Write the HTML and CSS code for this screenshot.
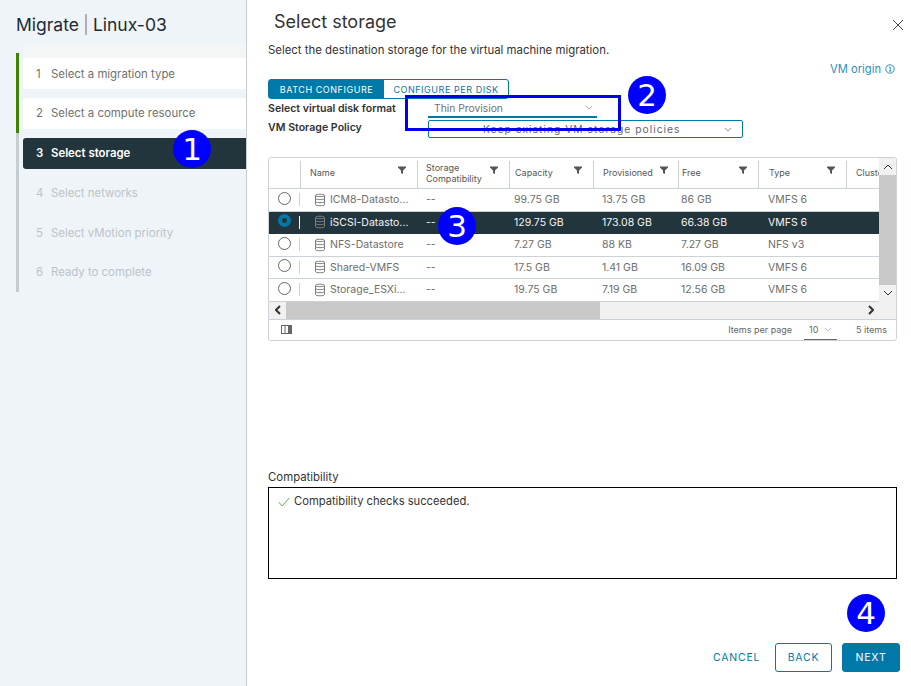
FILE: index.html
```html
<!DOCTYPE html>
<html lang="en">
<head>
    <meta charset="UTF-8">
    <meta name="viewport" content="width=device-width, initial-scale=1.0">
    <title>Migrate | Linux-03</title>
    <link rel="stylesheet" href="styles.css">
</head>
<body>
    <svg class="defs" width="0" height="0">
        <symbol id="filter" viewBox="0 0 10 10"><path d="M1 1.5h8v1L6 5.5V9L4 8V5.5L1 2.5z" fill="#555"/></symbol>
        <symbol id="db" viewBox="0 0 12 14" fill="none" stroke="#7d7d7d" stroke-width="1"><path d="M1.5 2.5C1.5 .8 10.5 .8 10.5 2.5V11.5C10.5 13.2 1.5 13.2 1.5 11.5Z"/><path d="M1.5 2.8C3 4 9 4 10.5 2.8M1.5 5.8C3 7 9 7 10.5 5.8M1.5 8.8C3 10 9 10 10.5 8.8"/></symbol>
        <symbol id="chev" viewBox="0 0 10 6" fill="none" stroke-width="1"><path d="M1 1l4 4 4-4"/></symbol>
    </svg>

    <div class="wizard">
        <aside class="sidebar">
            <h1 class="wizard-title">Migrate <span class="pipe">|</span> Linux-03</h1>
            <ol class="steps">
                <li class="step done first"><span class="step-box"><span class="num">1</span>Select a migration type</span></li>
                <li class="step done"><span class="step-box"><span class="num">2</span>Select a compute resource</span></li>
                <li class="step current"><span class="step-box"><span class="num">3</span>Select storage</span></li>
                <li class="step"><span class="step-box"><span class="num">4</span>Select networks</span></li>
                <li class="step"><span class="step-box"><span class="num">5</span>Select vMotion priority</span></li>
                <li class="step"><span class="step-box"><span class="num">6</span>Ready to complete</span></li>
            </ol>
        </aside>

        <main class="content">
            <div class="head-row">
                <h2 class="page-title">Select storage</h2>
                <svg class="close" width="12" height="12" viewBox="0 0 12 12"><path d="M1 1l10 10M11 1L1 11" stroke="#444" stroke-width="1" fill="none"/></svg>
            </div>
            <p class="desc">Select the destination storage for the virtual machine migration.</p>
            <div class="origin-row">
                <span class="origin">VM origin</span>
                <svg width="10" height="10" viewBox="0 0 10 10" fill="none" stroke="#2e8fc0"><circle cx="5" cy="5" r="4.2"/><path d="M4 3h1.2v4M4 7h2.4"/></svg>
            </div>

            <div class="tabs">
                <span class="tab active">BATCH CONFIGURE</span>
                <span class="tab">CONFIGURE PER DISK</span>
            </div>

            <div class="form-row row-format">
                <label>Select virtual disk format</label>
                <div class="select underline">
                    <span>Thin Provision</span>
                    <svg class="sel-chev" width="8" height="5"><use href="#chev" stroke="#999"/></svg>
                </div>
            </div>
            <div class="form-row row-policy">
                <label>VM Storage Policy</label>
                <div class="select boxed">
                    <span class="policy-text">Keep existing VM storage policies</span>
                    <svg class="sel-chev" width="8" height="5"><use href="#chev" stroke="#777"/></svg>
                </div>
            </div>

            <section class="grid">
                <div class="grid-top">
                    <div class="grid-body">
                        <div class="grid-row grid-head">
                            <div class="th first"></div>
                            <div class="th"><span>Name</span><svg width="10" height="10"><use href="#filter"/></svg></div>
                            <div class="th"><span>Storage<br>Compatibility</span><svg width="10" height="10"><use href="#filter"/></svg></div>
                            <div class="th"><span>Capacity</span><svg width="10" height="10"><use href="#filter"/></svg></div>
                            <div class="th"><span>Provisioned</span><svg width="10" height="10"><use href="#filter"/></svg></div>
                            <div class="th"><span>Free</span><svg width="10" height="10"><use href="#filter"/></svg></div>
                            <div class="th"><span>Type</span><svg width="10" height="10"><use href="#filter"/></svg></div>
                            <div class="th last"><span>Cluster</span></div>
                        </div>
                        <div class="grid-row item">
                            <div class="td pick"><i class="radio"></i></div>
                            <div class="td name"><svg width="12" height="14"><use href="#db"/></svg>ICM8-Datasto...</div>
                            <div class="td">--</div><div class="td">99.75 GB</div><div class="td">13.75 GB</div><div class="td">86 GB</div><div class="td">VMFS 6</div><div class="td"></div>
                        </div>
                        <div class="grid-row item selected">
                            <div class="td pick"><i class="radio on"></i></div>
                            <div class="td name"><svg width="12" height="14"><use href="#db"/></svg>iSCSI-Datasto...</div>
                            <div class="td">--</div><div class="td">129.75 GB</div><div class="td">173.08 GB</div><div class="td">66.38 GB</div><div class="td">VMFS 6</div><div class="td"></div>
                        </div>
                        <div class="grid-row item">
                            <div class="td pick"><i class="radio"></i></div>
                            <div class="td name"><svg width="12" height="14"><use href="#db"/></svg>NFS-Datastore</div>
                            <div class="td">--</div><div class="td">7.27 GB</div><div class="td">88 KB</div><div class="td">7.27 GB</div><div class="td">NFS v3</div><div class="td"></div>
                        </div>
                        <div class="grid-row item">
                            <div class="td pick"><i class="radio"></i></div>
                            <div class="td name"><svg width="12" height="14"><use href="#db"/></svg>Shared-VMFS</div>
                            <div class="td">--</div><div class="td">17.5 GB</div><div class="td">1.41 GB</div><div class="td">16.09 GB</div><div class="td">VMFS 6</div><div class="td"></div>
                        </div>
                        <div class="grid-row item">
                            <div class="td pick"><i class="radio"></i></div>
                            <div class="td name"><svg width="12" height="14"><use href="#db"/></svg>Storage_ESXi...</div>
                            <div class="td">--</div><div class="td">19.75 GB</div><div class="td">7.19 GB</div><div class="td">12.56 GB</div><div class="td">VMFS 6</div><div class="td"></div>
                        </div>
                    </div>
                    <div class="vscroll">
                        <span class="arrow"><svg width="10" height="6"><use href="#chev" class="up" stroke="#333" stroke-width="2"/></svg></span>
                        <span class="v-thumb"></span>
                        <span class="arrow"><svg width="10" height="6"><use href="#chev" stroke="#333" stroke-width="2"/></svg></span>
                    </div>
                </div>
                <div class="hscroll">
                    <span class="arrow"><svg width="6" height="10" viewBox="0 0 6 10" fill="none" stroke="#333" stroke-width="2"><path d="M5 1L1 5l4 4"/></svg></span>
                    <span class="h-thumb"></span>
                    <span class="arrow right"><svg width="6" height="10" viewBox="0 0 6 10" fill="none" stroke="#333" stroke-width="2"><path d="M1 1l4 4-4 4"/></svg></span>
                </div>
                <div class="grid-foot">
                    <svg class="cols" width="11" height="9" viewBox="0 0 11 9"><rect x=".5" y=".5" width="10" height="8" fill="none" stroke="#666"/><path d="M4 .5v8" stroke="#666"/><rect x="7" y="0" width="4" height="9" fill="#666"/></svg>
                    <span class="per-page">Items per page</span>
                    <span class="page-size">10<svg width="8" height="5"><use href="#chev" stroke="#aaa"/></svg></span>
                    <span class="count">5 items</span>
                </div>
            </section>

            <div class="compat-label">Compatibility</div>
            <div class="compat-box">
                <svg width="12" height="10" viewBox="0 0 12 10" fill="none" stroke="#6aa84f"><path d="M.8 5.2L4.2 9 11.2 1"/></svg>
                <span>Compatibility checks succeeded.</span>
            </div>

            <div class="actions">
                <button class="btn link">CANCEL</button>
                <button class="btn outline">BACK</button>
                <button class="btn primary">NEXT</button>
            </div>
        </main>
    </div>

    <!-- markup added on top of the screenshot -->
    <div class="callout c1">1</div>
    <div class="callout c2">2</div>
    <div class="callout c3">3</div>
    <div class="callout c4">4</div>
    <div class="callout-box"></div>
</body>
</html>
```

FILE: styles.css
```css
* {
    box-sizing: border-box;
}

html, body {
    margin: 0;
    height: 100%;
    overflow: hidden;
}

body {
    font-family: Inter, "Open Sans", sans-serif;
    background: #fff;
    color: #565656;
}

.defs {
    position: absolute;
}

.wizard {
    display: flex;
    height: 686px;
}

/* left column */
.sidebar {
    width: 247px;
    flex: none;
    background: #eff4f8;
    border-right: 1px solid #c5cdd3;
    padding: 15px 0 0 16px;
}

.wizard-title {
    margin: 0 0 18px;
    font-size: 17.5px;
    line-height: 20px;
    font-weight: 400;
    word-spacing: -.7px;
    color: #1c2b33;
}

.pipe {
    color: #a8703a;
    font-weight: 300;
}

.steps {
    list-style: none;
    margin: 0;
    padding: 0;
}

.step {
    height: 39.8px;
    padding: 5px 0 4px 4px;
    border-left: 3px solid #c5cdd3;
    font-size: 11.4px;
    color: #bcc3c8;
}

.step.done {
    border-left-color: #3f8400;
    color: #707070;
}

.step-box {
    display: flex;
    align-items: center;
    height: 31px;
    padding-left: 13px;
    border-radius: 3px 0 0 3px;
}

.num {
    width: 15px;
}

.step.done .step-box {
    background: #fff;
}

.step.first .step-box {
    box-shadow: 0 -13px 0 #f4f5f5;
}

.step.current {
    color: #fff;
    font-weight: 600;
}

.step.current .step-box {
    background: #22343c;
}

/* right column */
.content {
    flex: 1;
    min-width: 0;
    padding: 10px 11px 0 21px;
    display: flex;
    flex-direction: column;
}

.head-row {
    display: flex;
    justify-content: space-between;
    align-items: center;
    height: 22px;
    padding-left: 6px;
}

.page-title {
    margin: 0;
    font-size: 18px;
    font-weight: 400;
    color: #333;
}

.close {
    margin: 7px -4px 0 0;
}

.desc {
    margin: 10px 0 0;
    font-size: 11.4px;
    line-height: 16px;
    color: #333;
}

.origin-row {
    display: flex;
    justify-content: flex-end;
    align-items: center;
    gap: 4px;
    height: 14px;
    margin-top: 4px;
    margin-right: 5px;
    font-size: 11.2px;
    color: #2e8fc0;
}

.tabs {
    display: flex;
    width: 241px;
    height: 20px;
    margin-top: 3px;
    border: 1px solid #0079a8;
    border-radius: 3px;
    font-size: 9px;
    letter-spacing: .55px;
    color: #0079a8;
}

.tab {
    flex: 1;
    display: flex;
    align-items: center;
    justify-content: center;
}

.tab.active {
    flex: none;
    width: 115px;
    background: #0079a8;
    color: #fff;
}

.form-row {
    display: flex;
    align-items: center;
}

.form-row label {
    width: 160px;
    flex: none;
    font-size: 10.6px;
    font-weight: 600;
    color: #333;
}

.row-format {
    height: 19px;
}

.row-policy {
    height: 18px;
    margin-top: 2px;
}

.row-policy label {
    margin-top: -3px;
}

.select {
    display: flex;
    align-items: center;
    justify-content: space-between;
    font-size: 10.3px;
    color: #707070;
}

.select.underline {
    width: 169px;
    height: 19px;
    padding: 0 4px 0 6px;
    border-bottom: 2px solid #0079a8;
}

.select.boxed {
    width: 315px;
    height: 18px;
    padding: 0 10px 0 54px;
    border: 1px solid #0079a8;
    border-radius: 2px;
    color: #666;
}

.policy-text {
    letter-spacing: 1px;
}

.sel-chev {
    flex: none;
}

/* storage table */
.grid {
    width: 629px;
    margin-top: 19px;
    border: 1px solid #ccd3d8;
    border-radius: 3px;
    overflow: hidden;
    font-size: 10.5px;
}

.grid-top {
    display: flex;
}

.grid-body {
    width: 610px;
    flex: none;
    overflow: hidden;
}

.grid-row {
    display: grid;
    grid-template-columns: 31px 117px 92px 84px 85px 80px 88px 33px;
}

.grid-head {
    height: 31px;
    border-bottom: 1px solid #ccd3d8;
    font-size: 9px;
    color: #565656;
}

.th {
    display: flex;
    justify-content: space-between;
    align-items: center;
    margin: 3px 0 0;
    padding: 0 10px 4px 9px;
    border-left: 1px solid #ccd3d8;
    line-height: 11px;
    white-space: nowrap;
    overflow: hidden;
}

.th.first {
    border-left: 0;
}

.th.last {
    padding-right: 0;
}

.th svg {
    flex: none;
    margin-top: -6px;
}

/* the columns do not share one left padding */
.th:nth-child(3) {
    padding-left: 8px;
}

.th:nth-child(4), .td:nth-child(4) {
    padding-left: 5px;
}

.th:nth-child(5), .td:nth-child(5) {
    padding-left: 9px;
}

.th:nth-child(5) {
    padding-right: 9px;
}

.th:nth-child(6), .td:nth-child(6) {
    padding-left: 3px;
}

.th:nth-child(7), .td:nth-child(7) {
    padding-left: 10px;
}

.item {
    height: 22.5px;
    border-bottom: 1px solid #ccd3d8;
    color: #6e6e6e;
}

.item.selected {
    background: #22343c;
    border-bottom-color: #22343c;
    color: #f4f6f7;
}

.td {
    display: flex;
    align-items: center;
    padding-left: 9px;
    white-space: nowrap;
}

.td.name {
    padding-left: 14px;
    gap: 4px;
}

.td.pick {
    padding-left: 9px;
    position: relative;
    margin-top: -3px;
}

.td.pick::after {
    content: "";
    position: absolute;
    right: 0;
    top: 7px;
    height: 13px;
    border-left: 1px solid #ccd3d8;
}

.selected .td.pick::after {
    border-left-color: #fff;
}

.radio {
    display: block;
    width: 13px;
    height: 13px;
    border: 1px solid #666;
    border-radius: 50%;
    background: #fff;
}

.radio.on {
    border: 4.5px solid #0079a8;
    background: #22343c;
}

/* fake browser scrollbars */
.vscroll {
    width: 17px;
    flex: none;
    display: flex;
    flex-direction: column;
    background: #f1f1f1;
}

.arrow {
    height: 17px;
    width: 17px;
    flex: none;
    display: flex;
    align-items: center;
    justify-content: center;
}

.up {
    transform: rotate(180deg);
    transform-origin: 5px 3px;
}

.v-thumb {
    flex: 1;
    background: #c8c8c8;
}

.hscroll {
    display: flex;
    height: 18px;
    background: #f1f1f1;
    border-bottom: 1px solid #ccd3d8;
}

.h-thumb {
    width: 314px;
    background: #c8c8c8;
}

.arrow.right {
    margin-left: auto;
    margin-right: 17px;
}

.grid-foot {
    display: flex;
    align-items: center;
    height: 20px;
    padding: 0 9px 0 12px;
    font-size: 9px;
    color: #666;
}

.per-page {
    margin-left: auto;
}

.page-size {
    display: flex;
    align-items: center;
    justify-content: space-between;
    width: 33px;
    height: 20px;
    margin: 0 19px 0 12px;
    padding: 0 5px;
    border-bottom: 1px solid #666;
}

/* compatibility */
.compat-label {
    margin-top: 129px;
    font-size: 11.4px;
    line-height: 14px;
    color: #333;
}

.compat-box {
    display: flex;
    align-items: flex-start;
    gap: 4px;
    width: 629px;
    height: 92px;
    margin-top: 3px;
    padding: 7px 9px;
    border: 1px solid #000;
    font-size: 11.2px;
    line-height: 13px;
    color: #333;
}

.compat-box svg {
    flex: none;
    margin-top: 2px;
}

.actions {
    display: flex;
    justify-content: flex-end;
    align-items: center;
    gap: 10px;
    margin-top: 64px;
}

.btn {
    height: 29px;
    padding: 0;
    border: 1px solid #0079a8;
    border-radius: 3px;
    background: #fff;
    color: #0079a8;
    font-family: inherit;
    font-size: 10.5px;
    font-weight: 400;
    letter-spacing: .8px;
}

.btn.link {
    width: 46px;
    margin-right: 6px;
    border: 0;
}

.btn.outline {
    width: 57px;
}

.btn.primary {
    width: 58px;
    background: #0079a8;
    color: #fff;
}

/* annotation marks */
.callout {
    position: absolute;
    width: 38px;
    height: 38px;
    border-radius: 50%;
    background: #0000ff;
    color: #fff;
    font-family: "DejaVu Sans", sans-serif;
    font-size: 31px;
    line-height: 38px;
    text-align: center;
}

.c1 { left: 173px; top: 130px; }
.c2 { left: 628px; top: 76px; }
.c3 { left: 438px; top: 207px; }
.c4 { left: 847px; top: 594px; }

.callout-box {
    position: absolute;
    left: 405px;
    top: 95px;
    width: 216px;
    height: 36px;
    border: 3px solid #0000ee;
}
```
